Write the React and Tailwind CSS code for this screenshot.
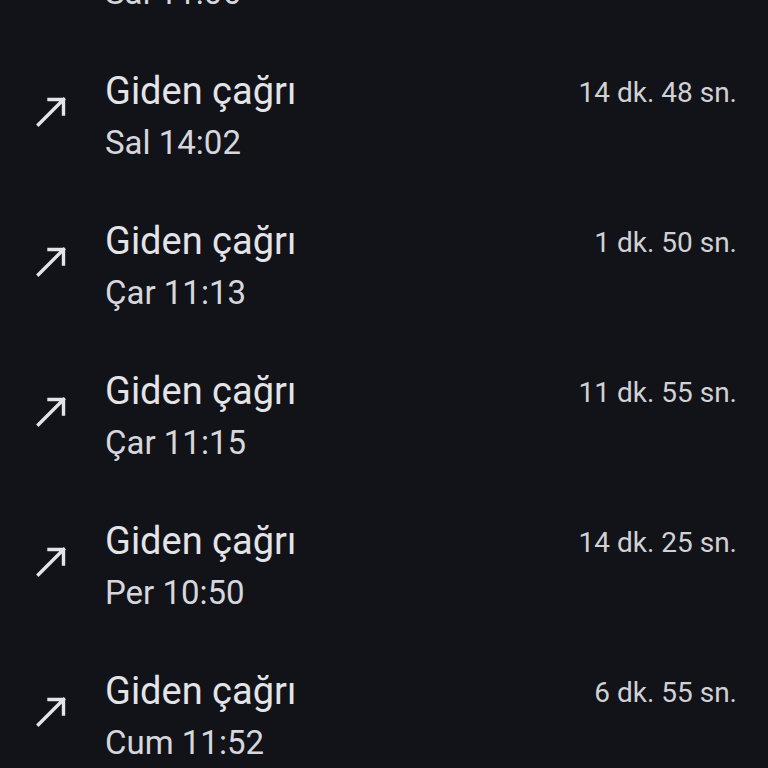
import React from "react";

const calls = [
  { label: "Giden çağrı", time: "Sal 11:06", duration: "3 dk. 12 sn." },
  { label: "Giden çağrı", time: "Sal 14:02", duration: "14 dk. 48 sn." },
  { label: "Giden çağrı", time: "Çar 11:13", duration: "1 dk. 50 sn." },
  { label: "Giden çağrı", time: "Çar 11:15", duration: "11 dk. 55 sn." },
  { label: "Giden çağrı", time: "Per 10:50", duration: "14 dk. 25 sn." },
  { label: "Giden çağrı", time: "Cum 11:52", duration: "6 dk. 55 sn." },
];

// outgoing call arrow (material "call_made" style)
const OutgoingIcon = () => (
  <svg width="32" height="32" viewBox="0 0 32 32" fill="none" className="text-[#e3e3e8]">
    <path
      d="M2.5 29.5 L27.5 4.5 M13 4.5 H27.5 V19"
      stroke="currentColor"
      strokeWidth="3.4"
      strokeLinecap="square"
    />
  </svg>
);

const CallRow = ({ call }) => (
  <div className="flex items-start h-[150px] pt-5 pl-[36px] pr-[31px]">
    <div className="w-[69px] shrink-0 pt-[32px]">
      <OutgoingIcon />
    </div>
    <div className="flex-1 min-w-0 pt-[2px]">
      <div className="text-[38px] leading-[52px] text-[#e3e3e8]">{call.label}</div>
      <div className="text-[33px] leading-[52px] text-[#d6d6dc]">{call.time}</div>
    </div>
    <div className="text-[28px] leading-[52px] pt-[4px] text-[#d0d0d5] whitespace-nowrap">
      {call.duration}
    </div>
  </div>
);

const App = () => {
  return (
    <div
      className="h-screen w-full overflow-hidden bg-[#111318]"
      style={{ fontFamily: "Roboto, 'Noto Sans', sans-serif" }}
    >
      <div className="-mt-[107px]">
        {calls.map((c, i) => (
          <CallRow key={i} call={c} />
        ))}
      </div>
    </div>
  );
};

export default App;
